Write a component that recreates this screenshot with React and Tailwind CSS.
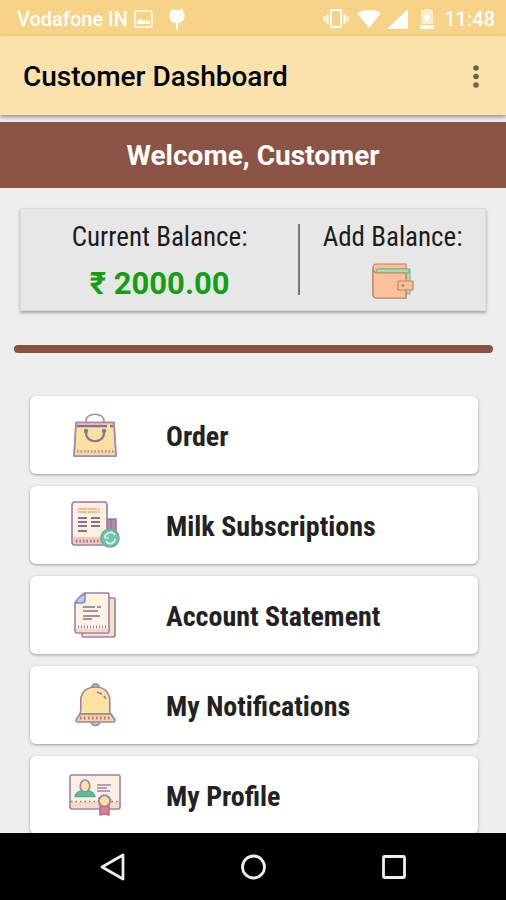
const WalletIcon = () => (
  <svg className="w-[42px] h-[36px]" viewBox="0 0 42 36" fill="none" stroke="#bb8366" strokeWidth="1.2" strokeLinejoin="round">
    <path d="M38 6H8v4h25v21h5z" fill="#a5dfb9" stroke="#7fb892" />
    <path d="M5 1h29v5H7c-3 0-3 4 0 4h27v25H5c-3 0-4-2-4-4V5c0-3 2-4 4-4z" fill="#fcc09a" />
    <path d="M6 6h31v4H6c-2 0-2-4 0-4z" fill="#a5dfb9" stroke="#7fb892" />
    <path d="M1 5v26c0 3 2 4 4 4h29V10H5c-2 0-4-2-4-5z" fill="#fcc09a" />
    <rect x="26" y="18" width="15" height="9" rx="1" fill="#fcc09a" />
    <circle cx="31" cy="22.5" r=".8" fill="#b5795c" />
  </svg>
);

const BagIcon = () => (
  <svg className="w-[44px] h-[44px]" viewBox="0 0 44 44" fill="none" stroke="#a088ae" strokeWidth="1.5" strokeLinejoin="round">
    <path d="M13 9V8c0-9 18-9 18 0v1" />
    <path d="M3 9.5h38l2 33.5H1z" fill="#fbe1a0" />
    <path d="M4 13h30M37 13h3" stroke="#8b6c9c" strokeWidth="2.4" />
    <path d="M2 36h40l.5 7h-41z" fill="#f9d6a4" stroke="none" />
    <path d="M4 38.5h37" stroke="#a67f86" strokeWidth="2" strokeDasharray="1.5 2" />
    <path d="M3 9.5h38l2 33.5H1z" />
    <path d="M13 18v2c0 11 18 11 18 0v-2" stroke="#8b748f" strokeWidth="2.2" />
    <circle cx="13" cy="18" r="1.5" fill="#688895" stroke="#688895" />
    <circle cx="31" cy="18" r="1.5" fill="#688895" stroke="#688895" />
  </svg>
);

const SubscriptionIcon = () => (
  <svg className="w-[50px] h-[48px]" viewBox="0 0 50 48" fill="none" stroke="#967ba8" strokeWidth="1.6" strokeLinejoin="round">
    <path d="M36 18h10v25H36z" fill="#b888a5" />
    <path d="M41 18v14" />
    <path d="M5 1h30c2 0 2 1 2 3v40H5c-2 0-3-1-3-3V4c0-2 1-3 3-3z" fill="#fdf0df" />
    <path d="M3 36h33v7H5c-2 0-2-2-2-7z" fill="#f1c9b4" stroke="none" />
    <path d="M6 40h25" strokeWidth="3" strokeDasharray="1.5 2" />
    <path d="M8 8h22M8 11h22" stroke="#f6b69c" strokeWidth="2" strokeDasharray="9 1" />
    <path d="M8 17h9M8 21h9M8 25h9M8 30h9M21 17h9M21 21h9M21 25h9" stroke="#85729a" strokeWidth="1.8" />
    <circle cx="40" cy="37" r="9" fill="#6bc8aa" stroke="#7d9fa0" />
    <path d="M45 34c-3-5-10-2-10 3M35 34v3h4M36 40c3 5 9 2 9-2" stroke="#d9f5e6" />
  </svg>
);

const StatementIcon = () => (
  <svg className="w-[42px] h-[46px]" viewBox="0 0 42 46" fill="none" stroke="#9a82ac" strokeWidth="1.6" strokeLinejoin="round">
    <path d="M9 6h31c1 0 1 1 1 1v37c0 1-1 1-1 1H9c-1 0-1-1-1-2V8z" fill="#f9e0c6" />
    <path d="M11 1h23c1 0 1 1 1 1v38c0 1-1 1-1 1H3c-1 0-2-1-2-2V11z" fill="#fff2e2" />
    <path d="M2 37h32v3H2z" fill="#f8d8c0" stroke="none" />
    <path d="M4 35h29" strokeWidth="3" strokeDasharray="1 2" />
    <path d="M1 11C4 6 7 3 11 1v7c0 2-1 3-3 3z" fill="#b3cffa" />
    <path d="M9 15h12M23 15h4M9 19h15M9 24h17M9 27h9" stroke="#85729a" strokeWidth="1.6" />
  </svg>
);

const BellIcon = () => (
  <svg className="w-[42px] h-[44px]" viewBox="0 0 42 44" fill="none" stroke="#9a82ac" strokeWidth="1.6" strokeLinejoin="round">
    <path d="M17 38h9c0 6-9 6-9 0z" fill="#b9c7ef" />
    <path d="M18 4c0-4 7-4 7 0z" fill="#b9c7ef" />
    <path d="M6 31C8 25 6 20 7 14 9 7 14 4 21.5 4s12 3 14 10c1 6-1 11 1 17z" fill="#fde2a2" />
    <path d="M6 31h31l4 6c0 1 0 2-1 2H3c-1 0-1-1-1-2z" fill="#f9cf9a" />
    <path d="M6 35h32" stroke="#a67f86" strokeWidth="3" strokeDasharray="1.5 2.5" />
    <path d="M23 9l5 2M30 13l2 3" />
  </svg>
);

const ProfileIcon = () => (
  <svg className="w-[52px] h-[42px]" viewBox="0 0 52 42" fill="none" stroke="#9a82ac" strokeWidth="1.6" strokeLinejoin="round">
    <rect x="1" y="1" width="50" height="34" rx="2" fill="#fdf0e3" />
    <path d="M2 28h48v6H2z" fill="#f9d9bf" stroke="none" />
    <path d="M2 27.5h48" stroke="#85729a" strokeDasharray="1.5 3" />
    <path d="M6 22.5c1-5 5-6 10-6s9 1 10 6z" fill="#50c3a0" stroke="#60a99c" />
    <ellipse cx="16" cy="12" rx="4.8" ry="6" fill="#fbe09f" />
    <path d="M28 11h14M28 14h10M28 17h13" strokeWidth="1.5" />
    <path d="M31 32h9v9l-4.500-1-4.500 1z" fill="#e87d88" stroke="#b46d8d" />
    <circle cx="35.5" cy="27" r="5.5" fill="#fee09a" />
    <circle cx="35.5" cy="27" r="6.2" strokeDasharray="1.5 1.5" />
  </svg>
);

const menuItems = [
  { label: 'Order', Icon: BagIcon },
  { label: 'Milk Subscriptions', Icon: SubscriptionIcon },
  { label: 'Account Statement', Icon: StatementIcon },
  { label: 'My Notifications', Icon: BellIcon },
  { label: 'My Profile', Icon: ProfileIcon },
];

const StatusBar = () => (
  <div className="flex h-9 shrink-0 items-center justify-between bg-[#f6d387] pt-px pl-[17px] pr-[11px] text-xl font-medium text-white">
    <div className="flex items-center">
      <span>Vodafone IN</span>
      <svg className="ml-[6px] w-[20px] h-[18px]" viewBox="0 0 20 18" fill="none">
        <rect x="1" y="1" width="17" height="16" rx="1.5" stroke="white" strokeWidth="1.5" />
        <path d="M3 14v-3l4-2 3 2 3-1 3 2v2z" fill="white" />
      </svg>
      <svg className="ml-[14px] w-[18px] h-[22px]" viewBox="0 0 18 22" fill="white">
        <path d="M3 3l1-2 2 1h6l2-1 1 2c1.500 2 1.500 4 1.500 5 0 4-3 7-5.500 7h-1v5c0 2-2 2-2 0v-5H7c-3 0-5.500-3-5.500-7 0-1 0-3 1.500-5z" />
        <circle cx="6" cy="6" r=".8" fill="#f6d387" />
        <circle cx="12" cy="6" r=".8" fill="#f6d387" />
      </svg>
    </div>
    <div className="flex items-center">
      <svg className="w-[26px] h-[20px]" viewBox="0 0 26 20" fill="none" stroke="white" strokeWidth="2">
        <rect x="8" y="1" width="10" height="17" rx="1" />
        <path d="M4.500 5v10M21.500 5v10M1.500 7.500v5M24.500 7.500v5" />
      </svg>
      <svg className="ml-2 w-[24px] h-[20px]" viewBox="0 0 24 20" fill="white">
        <path d="M0 4C6 0 18 0 24 4L12 19z" />
      </svg>
      <svg className="ml-[6px] w-[21px] h-[20px]" viewBox="0 0 21 20" fill="white">
        <path d="M0 20L21 0v20z" />
      </svg>
      <svg className="ml-[12px] w-[14px] h-[20px]" viewBox="0 0 14 20" fill="white">
        <path d="M4 1V0h6v1h3v14H1V1z" opacity=".55" />
        <path d="M0 16h14v4H0z" />
        <path d="M8 3L3 10h3l-1 4 6-7H8z" />
      </svg>
      <span className="ml-[10px]">11:48</span>
    </div>
  </div>
);

const BalanceCard = () => (
  <section className="mx-5 mt-5 flex h-[103px] border border-[#dcdcdc] bg-[#e7e7e7] py-[14px] shadow-[0_2px_3px_rgba(0,0,0,0.3)]">
    <div className="flex flex-[3] flex-col items-center">
      <h2 className="text-[27px] leading-[28px] text-[#1c1c1c]">Current Balance:</h2>
      <p className="mt-4 font-[Roboto] text-[31px] leading-[34px] font-bold text-[#12a012]">₹ 2000.00</p>
    </div>
    <div className="my-px w-[2px] bg-[#777]" />
    <div className="flex flex-[2] flex-col items-center">
      <h2 className="text-[27px] leading-[28px] text-[#1c1c1c]">Add Balance:</h2>
      <button type="button" aria-label="Add balance" className="mt-3">
        <WalletIcon />
      </button>
    </div>
  </section>
);

const MenuCard = ({ label, Icon }) => (
  <li>
    <button
      type="button"
      className="flex h-[78px] w-full items-center rounded-md bg-white text-left shadow-[0_1px_3px_rgba(0,0,0,0.35)]"
    >
      <span className="flex w-[130px] shrink-0 justify-center">
        <Icon />
      </span>
      <span className="pt-1 pl-[6px] text-[28px] leading-8 font-bold text-[#222]">{label}</span>
    </button>
  </li>
);

const NavBar = () => (
  <nav className="flex h-[67px] shrink-0 items-center justify-center gap-[112px] bg-black">
    <button type="button" aria-label="Back">
      <svg className="w-7 h-7" viewBox="0 0 28 28" fill="none" stroke="#eee" strokeWidth="2.8" strokeLinejoin="round">
        <path d="M24 2v24L3 14z" />
      </svg>
    </button>
    <button type="button" aria-label="Home">
      <svg className="w-7 h-7" viewBox="0 0 28 28" fill="none" stroke="#eee" strokeWidth="2.8">
        <circle cx="14.5" cy="14" r="11" />
      </svg>
    </button>
    <button type="button" aria-label="Recent apps">
      <svg className="w-7 h-7" viewBox="0 0 28 28" fill="none" stroke="#eee" strokeWidth="2.8">
        <rect x="4.5" y="3.5" width="21" height="21" rx="1" />
      </svg>
    </button>
  </nav>
);

const App = () => (
  <div className="flex h-screen flex-col bg-[#eeeeee] font-['Roboto',sans-serif]">
    <StatusBar />

    <header className="z-10 flex h-[79px] shrink-0 items-center justify-between bg-[#f9e3ab] pt-[2px] pl-[23px] pr-[21px] shadow-[0_2px_4px_rgba(0,0,0,0.4)]">
      <h1 className="text-[28px] leading-8 font-medium text-black">Customer Dashboard</h1>
      <button type="button" aria-label="More options">
        <svg className="w-[18px] h-6" viewBox="0 0 18 24" fill="#6b6350">
          <circle cx="9" cy="3" r="2.8" />
          <circle cx="9" cy="11.5" r="2.8" />
          <circle cx="9" cy="20" r="2.8" />
        </svg>
      </button>
    </header>

    <main className="min-h-0 flex-1 overflow-y-auto pt-[7px] font-['Roboto_Condensed','Liberation_Sans_Narrow',Roboto,sans-serif] [scrollbar-width:none]">
      <h2 className="bg-[#8a5445] pt-[18px] pb-4 text-center font-[Roboto] text-[28px] leading-8 font-bold text-white">
        Welcome, Customer
      </h2>
      <BalanceCard />
      <hr className="ml-[14px] mr-[13px] mt-[34px] h-[8px] rounded-full border-0 bg-[#8a5042]" />
      <ul className="mt-[43px] flex flex-col gap-3 pl-[30px] pr-[28px] pb-3">
        {menuItems.map((item) => (
          <MenuCard key={item.label} {...item} />
        ))}
      </ul>
    </main>

    <NavBar />
  </div>
);

export default App;
